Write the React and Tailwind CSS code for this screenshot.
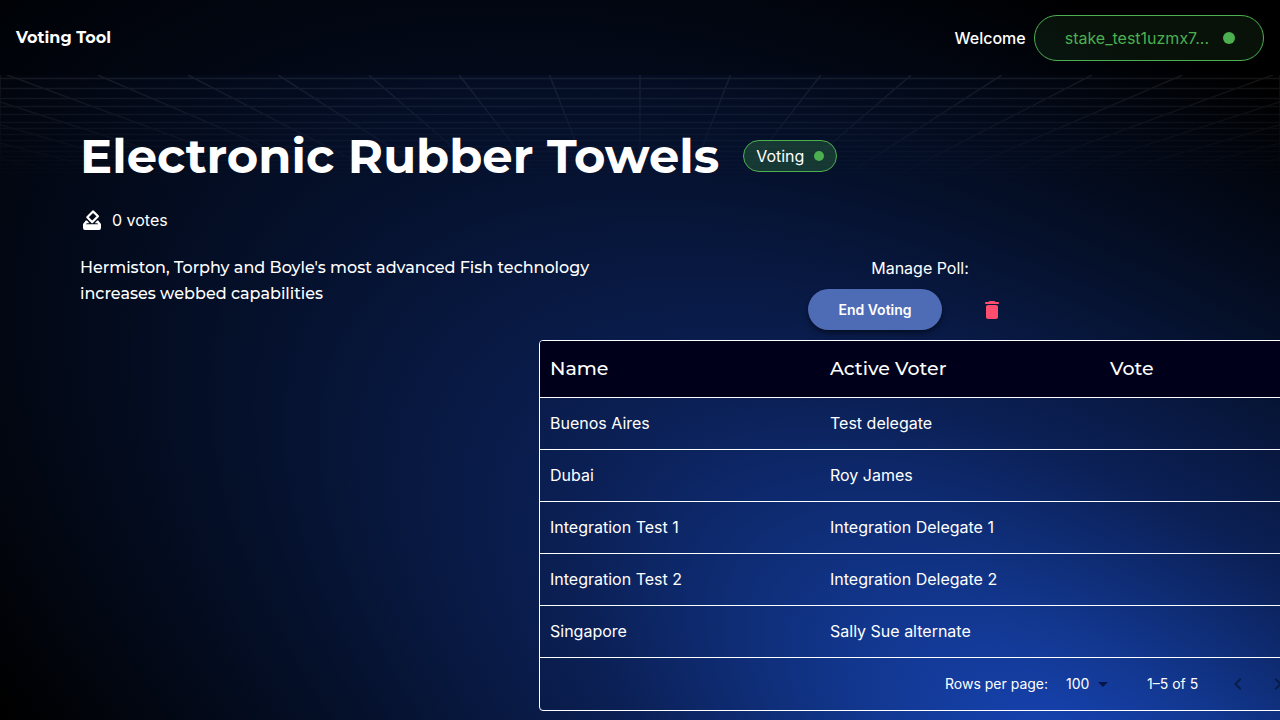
import { MdArrowDropDown, MdChevronLeft, MdChevronRight } from "react-icons/md";

const rows = [
  ["Buenos Aires", "Test delegate"],
  ["Dubai", "Roy James"],
  ["Integration Test 1", "Integration Delegate 1"],
  ["Integration Test 2", "Integration Delegate 2"],
  ["Singapore", "Sally Sue alternate"],
];

const rays = [-13, -12, -11, -10, -9, -8, -7, -6, -5, -4, -3, -2, -1, 0, 1, 2, 3, 4, 5, 6, 7, 8, 9, 10, 11, 12, 13];
const lines = [3, 13, 23, 31, 39, 47, 53, 59, 65, 71, 76, 81, 85, 89, 93, 97, 101, 104];

function Glow() {
  return (
    <svg className="absolute inset-0 -z-20 h-full w-full" viewBox="0 0 1280 720" preserveAspectRatio="none" aria-hidden="true">
      <defs>
        <radialGradient id="glow" gradientUnits="userSpaceOnUse" cx="0" cy="0" r="1" gradientTransform="translate(1090 780) rotate(32) scale(1440 690)">
          <stop offset="0" stopColor="#1846ba" />
          <stop offset="0.18" stopColor="#12378f" />
          <stop offset="0.4" stopColor="#0b2056" />
          <stop offset="0.65" stopColor="#05112d" />
          <stop offset="1" stopColor="#000000" />
        </radialGradient>
      </defs>
      <rect width="1280" height="720" fill="url(#glow)" />
    </svg>
  );
}

function Grid() {
  return (
    <svg className="absolute inset-x-0 top-0 -z-10 h-28 w-full" viewBox="0 0 1280 112" preserveAspectRatio="none" aria-hidden="true">
      <defs>
        <linearGradient id="fade" x1="0" y1="0" x2="0" y2="1">
          <stop offset="0" stopColor="#fff" stopOpacity="0.08" />
          <stop offset="1" stopColor="#fff" stopOpacity="0" />
        </linearGradient>
        <mask id="fadeMask">
          <rect width="1280" height="112" fill="url(#fade)" />
        </mask>
      </defs>
      <g mask="url(#fadeMask)" stroke="#fff" strokeWidth="1.5" fill="none">
        {lines.map((y) => (
          <path key={y} d={`M0 ${y}.5H1280`} />
        ))}
        {rays.map((n) => (
          <path key={n} d={`M${640 + n * 90.4} 0L${640 + n * 47} 112`} />
        ))}
        <path d="M0 0V112M1280 0V112" />
      </g>
    </svg>
  );
}

function BallotIcon() {
  return (
    <svg viewBox="0 0 24 24" className="size-6" aria-hidden="true">
      <path d="M13 3.4L18 8.3L12.2 14.1L7.3 9.2Z" fill="none" stroke="currentColor" strokeWidth="2.2" strokeLinejoin="round" />
      <path d="M5.8 12.6H7l2.4 2.6H6.8L5.8 16.2H18.2L17.2 15.2H14.8L17.2 12.6H18.2L21 16V20a2 2 0 0 1-2 2H5a2 2 0 0 1-2-2V16Z" fill="currentColor" />
    </svg>
  );
}

function TrashIcon() {
  return (
    <svg viewBox="0 0 24 24" className="size-6" fill="currentColor" aria-hidden="true">
      <path d="M6 19c0 1.1.9 2 2 2h8c1.1 0 2-.9 2-2V9c0-1.1-.9-2-2-2H8c-1.1 0-2 .9-2 2v10zM18 4h-2.5l-.71-.71c-.18-.18-.44-.29-.7-.29H9.91c-.26 0-.52.11-.7.29L8.5 4H6c-.55 0-1 .45-1 1s.45 1 1 1h12c.55 0 1-.45 1-1s-.45-1-1-1z" />
    </svg>
  );
}

export default function App() {
  return (
    <div className="relative isolate min-h-screen overflow-hidden bg-black font-['Inter',sans-serif] text-base text-white">
      <Glow />
      <header className="flex h-[75px] items-center justify-between bg-black/25 px-4">
        <a href="#" className="font-['Montserrat','Inter',sans-serif] font-bold">Voting Tool</a>
        <div className="flex items-center gap-2">
          <span className="font-medium">Welcome</span>
          <button className="flex h-[46px] items-center gap-3.5 rounded-full border border-[#4caf50] bg-[#4caf50]/10 pr-7 pl-[30px] text-[#4caf50]">
            stake_test1uzmx7...
            <span className="size-3 rounded-full bg-[#4caf50]" />
          </button>
        </div>
      </header>
      <main className="relative px-20 pt-[52px]">
        <Grid />
        <div className="flex items-center gap-6">
          <h1 className="font-['Montserrat','Inter',sans-serif] text-5xl leading-[58px] font-bold">Electronic Rubber Towels</h1>
          <span className="flex h-8 items-center gap-2.5 rounded-full border border-[#4caf50] bg-[#4caf50]/25 px-3">
            Voting
            <span className="size-2.5 rounded-full bg-[#4caf50]" />
          </span>
        </div>
        <div className="mt-[23px] flex items-center gap-2">
          <BallotIcon />
          <span>0 votes</span>
        </div>
        <div className="mt-[23px] grid grid-cols-2">
          <p className="max-w-[540px] font-['Montserrat','Inter',sans-serif] leading-[26px] font-medium">
            Hermiston, Torphy and Boyle's most advanced Fish technology increases webbed capabilities
          </p>
          <div className="flex flex-col items-center gap-2">
            <span className="leading-[26px]">Manage Poll:</span>
            <div className="flex items-center gap-2.5">
              <button className="h-[41px] rounded-full bg-[#4e6cb5] px-[30px] text-sm font-semibold shadow-md shadow-black/40">End Voting</button>
              <button aria-label="Delete poll" className="px-7 py-2 text-[#ff4d6d]">
                <TrashIcon />
              </button>
            </div>
          </div>
        </div>
        <div className="mt-2.5 ml-[459px] w-[1122px] overflow-hidden rounded border border-white">
          <table className="w-full table-fixed text-left">
            <thead className="bg-[#00001b] font-['Montserrat','Inter',sans-serif] text-[19px]">
              <tr className="h-14 border-b border-white">
                <th className="px-2.5 font-medium">Name</th>
                <th className="px-2.5 font-medium">Active Voter</th>
                <th className="px-2.5 font-medium">Vote</th>
                <th aria-label="Actions" />
              </tr>
            </thead>
            <tbody>
              {rows.map(([name, voter]) => (
                <tr key={name} className="h-[52px] border-b border-white">
                  <td className="px-2.5">{name}</td>
                  <td className="px-2.5">{voter}</td>
                  <td />
                  <td />
                </tr>
              ))}
            </tbody>
          </table>
          <div className="flex h-[52px] items-center pl-[405px] text-sm">
            <label htmlFor="rows">Rows per page:</label>
            <div className="relative ml-[18px] flex items-center">
              <select id="rows" className="w-[46px] appearance-none bg-transparent">
                <option>100</option>
              </select>
              <MdArrowDropDown className="pointer-events-none absolute right-[-3px] size-6 text-[#07164a]" />
            </div>
            <span className="ml-[35px]">1–5 of 5</span>
            <button aria-label="Previous page" disabled className="ml-7 text-black/40">
              <MdChevronLeft className="size-6" />
            </button>
            <button aria-label="Next page" disabled className="ml-4 text-black/40">
              <MdChevronRight className="size-6" />
            </button>
          </div>
        </div>
      </main>
    </div>
  );
}
